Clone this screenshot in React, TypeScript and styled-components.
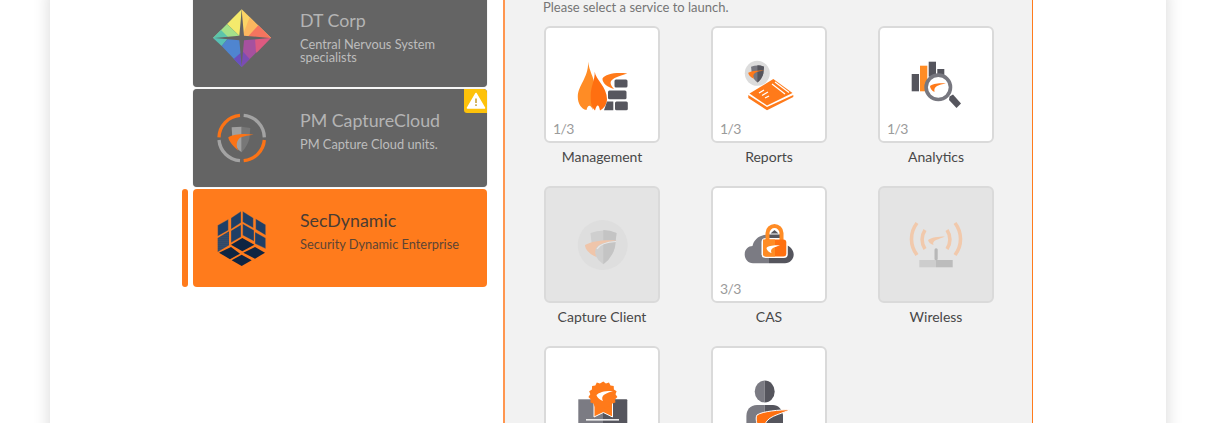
import React from "react";
import styled, { createGlobalStyle } from "styled-components";

const Global = createGlobalStyle`
  html, body { margin: 0; padding: 0; background: #fff; }
  body { font-family: "Lato", "Open Sans", sans-serif; overflow: hidden; }
`;

const Page = styled.div`
  height: 423px;
  overflow: hidden;
  background: #fff;
`;

const Sheet = styled.main`
  width: 1116px;
  height: 520px;
  margin: -11px 0 0 50px;
  background: #fff;
  box-shadow: 0 0 16px rgba(0, 0, 0, 0.16);
  display: flex;
  gap: 16px;
  padding-left: 143px;
  box-sizing: border-box;
`;

const Tenants = styled.section`
  width: 294px;
  display: flex;
  flex-direction: column;
  gap: 2px;
`;

const TenantCard = styled.article<{ $active?: boolean }>`
  position: relative;
  height: 98px;
  box-sizing: border-box;
  display: flex;
  align-items: flex-start;
  gap: 23px;
  padding: 13px 12px;
  border-radius: 4px;
  background: ${(p) => (p.$active ? "#ff7b1c" : "#646464")};
  box-shadow: ${(p) => (p.$active ? "none" : "0 0 1px rgba(0,0,0,.35)")};
  &::before {
    content: "";
    display: ${(p) => (p.$active ? "block" : "none")};
    position: absolute;
    left: -11px;
    top: 0;
    bottom: 0;
    width: 6px;
    border-radius: 3px;
    background: #ff7b1c;
  }
`;

const TenantLogo = styled.svg`
  width: 72px;
  height: 72px;
  flex: none;
`;

const TenantText = styled.div`
  padding-top: 7px;
  min-width: 0;
  width: 170px;
`;

const TenantName = styled.h3<{ $active?: boolean }>`
  margin: 0 0 7px;
  font-size: 17.8px;
  line-height: 22px;
  font-weight: 400;
  white-space: nowrap;
  color: ${(p) => (p.$active ? "#4a3c33" : "#b4b4b4")};
`;

const TenantInfo = styled.p<{ $active?: boolean }>`
  margin: 0;
  font-size: 12.8px;
  line-height: 13px;
  white-space: ${(p) => (p.$active ? "nowrap" : "normal")};
  color: ${(p) => (p.$active ? "#5c4434" : "#bdbdbd")};
`;

const WarnBadge = styled.div`
  position: absolute;
  top: 0;
  right: 0;
  width: 23px;
  height: 24px;
  background: #fdc20a;
  border-radius: 0 4px 0 3px;
  display: flex;
  align-items: center;
  justify-content: center;
`;

const Panel = styled.section`
  width: 530px;
  box-sizing: border-box;
  border-left: 2px solid #ff9650;
  border-right: 1px solid #ff7b1c;
  background: #f2f2f2;
  padding: 9px 0 0 39px;
`;

const Prompt = styled.p`
  margin: 0 0 10px -1px;
  font-size: 13px;
  line-height: 18px;
  color: #757575;
`;

const ServiceGrid = styled.div`
  display: grid;
  grid-template-columns: repeat(3, 116px);
  column-gap: 51px;
  grid-auto-rows: 160px;
`;

const Service = styled.div`
  display: flex;
  flex-direction: column;
  align-items: center;
`;

const Tile = styled.div<{ $off?: boolean }>`
  position: relative;
  width: 116px;
  height: 117px;
  flex: none;
  box-sizing: border-box;
  border: 2px solid #dadada;
  border-radius: 6px;
  background: ${(p) => (p.$off ? "#e4e4e4" : "#fff")};
  display: flex;
  align-items: center;
  justify-content: center;
`;

const TileIcon = styled.svg.attrs({ viewBox: "26 26 64 64" })`
  width: 64px;
  height: 64px;
  flex: none;
`;

const Count = styled.span`
  position: absolute;
  left: 7px;
  bottom: 4px;
  font-size: 14px;
  line-height: 16px;
  letter-spacing: -0.6px;
  color: #9b9b9b;
`;

const ServiceName = styled.span`
  margin-top: 4px;
  font-size: 14px;
  line-height: 20px;
  color: #484848;
  white-space: nowrap;
`;

const DtLogo = () => (
  <TenantLogo viewBox="0 0 216 216">
    <polygon points="110,22 110,108 66,66" fill="#f4ea6c" />
    <polygon points="66,66 110,108 24,108" fill="#a4e08a" />
    <polygon points="48,84 72,108 24,108" fill="#5cc4ab" />
    <polygon points="24,108 70,108 50,132" fill="#58c0b4" />
    <polygon points="50,132 70,108 110,108 110,195" fill="#4f85d0" />
    <polygon points="110,150 110,195 86,171" fill="#6a4fbe" />
    <polygon points="110,22 198,108 110,108" fill="#fbd466" />
    <polygon points="134,46 198,108 110,108" fill="#fbb75f" />
    <polygon points="160,70 198,108 125,108" fill="#f5745f" />
    <polygon points="110,108 198,108 155,152" fill="#dd5a80" />
    <polygon points="110,108 150,108 153,152 110,195" fill="#a6519f" />
    <polygon points="110,145 134,171 110,195" fill="#7a4cb4" />
    <path d="M110 24 L117 101 L194 108 L117 115 L110 192 L103 115 L28 108 L103 101 Z" fill="#636363" />
  </TenantLogo>
);

const PmLogo = () => (
  <TenantLogo viewBox="0 -6 216 216">
    <g fill="none" strokeWidth="10">
      <path d="M42 100 A68 68 0 0 1 105 34" stroke="#fb7316" />
      <path d="M116 34 A68 68 0 0 1 178 100" stroke="#a3a3a3" />
      <path d="M42 108 A68 68 0 0 0 105 170" stroke="#a3a3a3" />
      <path d="M116 170 A68 68 0 0 0 178 108" stroke="#fb7316" />
    </g>
    <path d="M80 70 L110 68 L110 145 Q88 130 82 105Z" fill="#a0a0a0" />
    <path d="M110 68 L136 72 L133 105 Q126 128 110 145Z" fill="#777" />
    <path d="M146 92 C118 88 86 90 70 100 C70 112 88 130 100 140 C92 124 94 108 108 100 C118 96 132 94 146 92Z" fill="#fb7316" />
  </TenantLogo>
);

const secTiles = [
  "38,70 70,52 70,85 38,103",
  "78,48 108,28 108,62 78,82",
  "113,28 145,48 145,78 113,60",
  "152,50 182,68 182,100 152,82",
  "78,86 108,68 108,105 78,122",
  "113,65 147,85 147,118 113,100",
  "150,90 182,108 182,140 150,125",
];
const secDiamonds = [
  "112,108 148,128 112,148 78,128",
  "78,135 105,155 75,172 42,152",
  "150,135 180,152 150,170 115,152",
  "110,158 140,175 110,192 80,175",
];

const SecLogo = () => (
  <TenantLogo viewBox="0 0 216 216">
    <defs>
      <pattern id="secDots" width="6" height="6" patternUnits="userSpaceOnUse">
        <rect width="6" height="6" fill="#1f3f66" />
        <circle cx="3" cy="3" r="1.5" fill="#8a8078" />
      </pattern>
    </defs>
    {secTiles.map((p) => (
      <polygon key={p} points={p} fill="#1f3f66" stroke="#ee8a3a" strokeWidth="1" />
    ))}
    <polygon points="38,108 72,88 72,130 38,150" fill="url(#secDots)" />
    {secDiamonds.map((p) => (
      <polygon key={p} points={p} fill="#0f2542" />
    ))}
  </TenantLogo>
);

const Warn = () => (
  <svg width="20" height="18" viewBox="0 0 20 18">
    <path d="M10 1.5 L18.5 16 H1.5 Z" fill="#fff" stroke="#fff" strokeWidth="1.5" strokeLinejoin="round" />
    <rect x="9.2" y="6.5" width="1.6" height="4.5" fill="#c9a23a" />
    <rect x="9.2" y="12.3" width="1.6" height="1.7" fill="#c9a23a" />
  </svg>
);

const ManagementIcon = () => (
  <TileIcon>
    <path d="M44.3 34.7 C45 44 50 50 50.5 58 C51 68 48 78 49 83 C47 78 44 76.5 42.5 83 C37 82 33.8 76 33.8 70 C33.8 58 44 52 44.3 34.7Z" fill="#ff8c25" />
    <path d="M50.7 44.7 C51.5 52 63 60 63 72 C63 78 59 82 56 83.5 C55 78 53 76 51 83.5 C47 80 46.7 75 46.7 68 C46.7 60 51 53 50.7 44.7Z" fill="#ff6f10" />
    <path d="M83.3 46.5 C72 45 61 47 58.5 51.5 C58 56 64 60.5 70 62 C66.5 58 65.5 55 68 53 C71 50 77 48.5 83.3 46.5Z" fill="#ff7a1a" />
    <rect x="70.5" y="52.5" width="13" height="8" rx="1.5" fill="#56565e" />
    <rect x="64" y="63.5" width="18.5" height="8.8" rx="1.5" fill="#56565e" />
    <path d="M63 74.5 H69.3 V83.3 H60 Z" fill="#56565e" />
    <rect x="71" y="74.5" width="12.8" height="8.8" rx="1.5" fill="#56565e" />
  </TileIcon>
);

const ShieldMark = ({ top, side, sw }: { top: string; side: string; sw: string }) => (
  <>
    <path d="M46.5 46 Q59.5 41 72.5 46 L71 60 Q68 71 59.3 77.3 Q50.5 71 48 60Z" fill={top} />
    <path d="M59.3 43 Q66 43 72.5 46 L71 60 Q68 71 59.3 77.3Z" fill={side} />
    <path d="M73 53.5 C60 52.5 48 54 41 58 C41 63 47 68 52.5 70 C50 65 51 60 56 57.5 C60 55.5 66 54.5 73 53.5Z" fill={sw} />
  </>
);

const ReportsIcon = () => (
  <TileIcon>
    <path d="M37.3 68 L56 80 L82.3 68 L82.3 70 L56 83.3 L37.3 71 Z" fill="#ff7a1a" />
    <path d="M62.3 52 L81.5 66 L56 78.5 L38.5 66.5 Z" fill="#ff7a1a" />
    <path d="M64 55 L78 65.5 M61 57 L74 67" stroke="#fff" strokeWidth="1.2" />
    <path d="M48 66 L53 63 M51 68.5 L57 65 M54 71 L58 69" stroke="#fff" strokeWidth="1.3" />
    <circle cx="46.3" cy="46.3" r="12.5" fill="#dcdcdc" />
    <g transform="translate(46.3 46.3) scale(.5) translate(-59 -59)">
      <ShieldMark top="#77777f" side="#55555d" sw="#ff7a1a" />
    </g>
  </TileIcon>
);

const AnalyticsIcon = () => (
  <TileIcon>
    <rect x="33.7" y="47" width="7.3" height="17.3" fill="#55555d" />
    <rect x="42" y="38.7" width="7.3" height="25.6" fill="#ff8c25" />
    <rect x="50.7" y="34.7" width="7.3" height="15" fill="#55555d" />
    <rect x="59.3" y="42" width="7" height="6" fill="#55555d" />
    <path d="M71.5 69.5 L75 67.5 L83 76.5 L78.5 81 L71 73Z" fill="#55555d" />
    <circle cx="60.3" cy="60.3" r="12.2" fill="#fff" stroke="#77777f" strokeWidth="3.6" />
    <path d="M68 56.5 C61 55.5 54 57 52 59 C52 61 54 64 56.5 65 C56 62 56.5 60.5 59 59 C61.5 58 64 57 68 56.5Z" fill="#ff7a1a" />
  </TileIcon>
);

const CaptureClientIcon = () => (
  <TileIcon>
    <circle cx="58.7" cy="58" r="25" fill="#dedede" />
    <ShieldMark top="#cfcfcf" side="#c4c4c4" sw="#efc5aa" />
    <path d="M72 54.5 C64 55 56 56.5 53 62" fill="none" stroke="#e8e8e8" strokeWidth="1.2" />
  </TileIcon>
);

const CasIcon = () => (
  <TileIcon>
    <path d="M58 76.3 H42 C37 76.3 33.7 72 33.7 67.5 C33.7 62 37.5 59 41.5 59 C43 52 49 47.5 58 47.5 Z" fill="#7b7b83" />
    <path d="M58 47.5 H70 L74 58 C79 58.5 82.7 63 82.7 67.5 C82.7 72 79 76.3 74 76.3 H58Z" fill="#55555d" />
    <rect x="50.5" y="51" width="26.3" height="20" rx="4" fill="#fff" />
    <path d="M56.5 54 V46 C56.5 42 60 39 63.5 39 C67 39 70.5 42 70.5 46 V54" fill="none" stroke="#ff8c25" strokeWidth="4" />
    <rect x="52" y="52.5" width="23.3" height="17" rx="3" fill="#ff7010" />
    <path d="M52 52.5 H64 V69.5 H55 Q52 69.5 52 66.5Z" fill="#ff8c25" />
    <path d="M59.5 46.5 L63.5 43 L67.5 46.5Z" fill="#55555d" />
    <path d="M69 58.5 C63 58 57 59 55.5 61 C55.5 63 58 65.5 60.5 66 C59.5 64 60 62 62 61 C64 60 66 59.3 69 58.5Z" fill="#fff" />
  </TileIcon>
);

const WirelessIcon = () => (
  <TileIcon>
    <g fill="none" stroke="#f1c9ac" strokeWidth="3.6">
      <path d="M39 36 A26 26 0 0 0 39 68" />
      <path d="M77 36 A26 26 0 0 1 77 68" />
      <path d="M47 43 A17 17 0 0 0 47 62" />
      <path d="M69 43 A17 17 0 0 1 69 62" />
    </g>
    <path d="M67 49.5 C60 49.5 53 50.5 50 53 C50.5 55.5 53 57.5 55.5 58 C54.5 56 55.5 54 58 53 C61 51.8 64 51 67 49.5Z" fill="#f1c9ac" />
    <rect x="41.3" y="73" width="16.7" height="7.3" fill="#cdcdcd" />
    <rect x="58" y="73" width="16.7" height="7.3" fill="#bcbcbc" />
    <rect x="56.5" y="61.3" width="3.2" height="12" rx="1.5" fill="#b8b8b8" />
  </TileIcon>
);

const CertificateIcon = () => (
  <TileIcon>
    <rect x="34.3" y="52.3" width="24.7" height="38" fill="#7b7b83" />
    <rect x="59" y="52.3" width="24.3" height="38" rx="1" fill="#55555d" />
    <rect x="42" y="72" width="33" height="1.6" fill="#ececec" />
    <rect x="42" y="76" width="33" height="1.6" fill="#ececec" />
    <path d="M50 55 L50 70 L59.3 65.5 L68.5 70 L68.5 55Z" fill="#ff7a1a" stroke="#fff" strokeWidth="1" />
    <path
      d="M59.3 34.5 l2.6 2 3.1 -.9 1.5 2.9 3.2 .6 .2 3.3 2.7 1.8 -1.1 3 1.9 2.7 -2.3 2.3 .3 3.2 -3.1 1 -1.1 3 -3.2 -.2 -2.2 2.4 -2.9 -1.5 -2.9 1.5 -2.2 -2.4 -3.2 .2 -1.1 -3 -3.1 -1 .3 -3.2 -2.3 -2.3 1.9 -2.7 -1.1 -3 2.7 -1.8 .2 -3.3 3.2 -.6 1.5 -2.9 3.1 .9Z"
      fill="#ff7a1a"
    />
    <path d="M69 44 C62 43.5 55 45 52.5 48 C53 50.5 56 53 59 54 C57.5 51.5 58 49 60.5 47.5 C63 46 66 45 69 44Z" fill="#fff" />
  </TileIcon>
);

const UserIcon = () => (
  <TileIcon>
    <path d="M53.7 33.5 A10 11 0 0 0 53.7 55.5Z" fill="#7b7b83" />
    <path d="M53.7 33.5 A10 11 0 0 1 53.7 55.5Z" fill="#55555d" />
    <path d="M53.7 58 H46 C39 58 35.4 63 35.4 69 V90 H53.7Z" fill="#7b7b83" />
    <path d="M53.7 58 H62 C67 58 71 62 72 68 V90 H53.7Z" fill="#55555d" />
    <path d="M80 62.5 C68 63 52 64 46 68 C43.5 72 47 82 52 90 H58 C53 82 52 77 58 72 C63 68 72 66 80 62.5Z" fill="#ff7010" stroke="#fff" strokeWidth="1" />
  </TileIcon>
);

type Svc = { name?: string; count?: string; off?: boolean; icon: React.ReactNode };

const services: Svc[] = [
  { name: "Management", count: "1/3", icon: <ManagementIcon /> },
  { name: "Reports", count: "1/3", icon: <ReportsIcon /> },
  { name: "Analytics", count: "1/3", icon: <AnalyticsIcon /> },
  { name: "Capture Client", off: true, icon: <CaptureClientIcon /> },
  { name: "CAS", count: "3/3", icon: <CasIcon /> },
  { name: "Wireless", off: true, icon: <WirelessIcon /> },
  { icon: <CertificateIcon /> },
  { icon: <UserIcon /> },
];

export default function App() {
  return (
    <Page>
      <Global />
      <Sheet>
        <Tenants>
          <TenantCard>
            <DtLogo />
            <TenantText>
              <TenantName>DT Corp</TenantName>
              <TenantInfo>Central Nervous System specialists</TenantInfo>
            </TenantText>
          </TenantCard>
          <TenantCard>
            <PmLogo />
            <TenantText>
              <TenantName>PM CaptureCloud</TenantName>
              <TenantInfo>PM Capture Cloud units.</TenantInfo>
            </TenantText>
            <WarnBadge>
              <Warn />
            </WarnBadge>
          </TenantCard>
          <TenantCard $active>
            <SecLogo />
            <TenantText>
              <TenantName $active>SecDynamic</TenantName>
              <TenantInfo $active>Security Dynamic Enterprise</TenantInfo>
            </TenantText>
          </TenantCard>
        </Tenants>
        <Panel>
          <Prompt>Please select a service to launch.</Prompt>
          <ServiceGrid>
            {services.map((s, i) => (
              <Service key={i}>
                <Tile $off={s.off}>
                  {s.icon}
                  {s.count && <Count>{s.count}</Count>}
                </Tile>
                {s.name && <ServiceName>{s.name}</ServiceName>}
              </Service>
            ))}
          </ServiceGrid>
        </Panel>
      </Sheet>
    </Page>
  );
}
